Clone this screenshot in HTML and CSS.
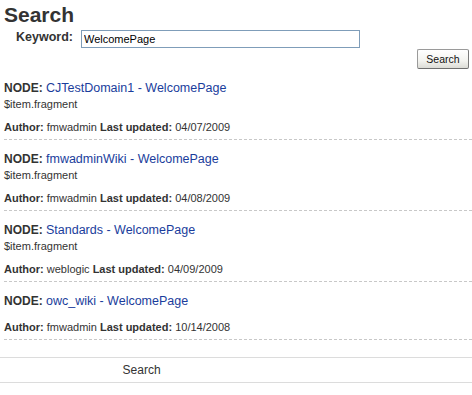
FILE: index.html
```html
<!DOCTYPE html>
<html lang="en">
<head>
  <meta charset="UTF-8">
  <title>Search</title>
  <link rel="stylesheet" href="styles.css">
</head>
<body>

  <div class="page">
    <h1>Search</h1>

    <form class="search-form" onsubmit="return false">
      <div class="keyword-row">
        <label for="kw">Keyword:</label>
        <input id="kw" type="text" value="WelcomePage">
      </div>
      <div class="button-row">
        <button type="submit">Search</button>
      </div>
    </form>

    <div class="results">
      <div class="result">
        <div class="node">NODE: <a href="#">CJTestDomain1 - WelcomePage</a></div>
        <div class="fragment">$item.fragment</div>
        <div class="meta"><b>Author:</b> fmwadmin <b>Last updated:</b> 04/07/2009</div>
      </div>
      <div class="result">
        <div class="node">NODE: <a href="#">fmwadminWiki - WelcomePage</a></div>
        <div class="fragment">$item.fragment</div>
        <div class="meta"><b>Author:</b> fmwadmin <b>Last updated:</b> 04/08/2009</div>
      </div>
      <div class="result">
        <div class="node">NODE: <a href="#">Standards - WelcomePage</a></div>
        <div class="fragment">$item.fragment</div>
        <div class="meta"><b>Author:</b> weblogic <b>Last updated:</b> 04/09/2009</div>
      </div>
      <div class="result">
        <div class="node">NODE: <a href="#">owc_wiki - WelcomePage</a></div>
        <div class="fragment"></div>
        <div class="meta"><b>Author:</b> fmwadmin <b>Last updated:</b> 10/14/2008</div>
      </div>
    </div>
  </div>

  <div class="pager">
    <div class="pager-cell">Search</div>
  </div>

</body>
</html>
```

FILE: styles.css
```css
body {
  margin: 0;
  font-family: "Liberation Sans", Arial, sans-serif;
  color: #333;
  background: #fff;
}
.page {
  padding: 3px 0 0 4px;
}
h1 {
  margin: 0;
  font-size: 21px;
  line-height: 24px;
  font-weight: bold;
  color: #333;
}
.search-form {
  margin: 3px 0 0 0;
}
.keyword-row {
  display: flex;
  align-items: flex-start;
  gap: 8px;
  padding-left: 12px;
}
.keyword-row label {
  font-size: 12.5px;
  font-weight: bold;
  line-height: 14px;
}
.keyword-row input {
  box-sizing: border-box;
  width: 279px;
  height: 18px;
  margin: 0;
  padding: 0 2px;
  border: 1px solid #7f9db9;
  font-family: "Liberation Sans", Arial, sans-serif;
  font-size: 11px;
  color: #000;
  outline: none;
}
.button-row {
  display: flex;
  justify-content: flex-end;
  padding-right: 3px;
  margin-top: 1px;
}
.button-row button {
  box-sizing: border-box;
  width: 52px;
  height: 20px;
  margin: 0;
  padding: 0;
  border: 1px solid #9a9a9a;
  border-bottom-color: #6f6f6f;
  border-right-color: #7a7a7a;
  border-radius: 2px;
  background: linear-gradient(#ffffff, #f3f3ef 60%, #dcdcd6);
  font-family: "Liberation Sans", Arial, sans-serif;
  font-size: 10.5px;
  color: #111;
}
.result {
  padding: 11px 0 5px 0;
  border-bottom: 1px dashed #c8c8c8;
}
.node {
  font-size: 12px;
  line-height: 16px;
  font-weight: bold;
}
.node a {
  font-size: 12.5px;
  font-weight: normal;
  color: #1a3d9c;
  text-decoration: none;
}
.fragment {
  padding-top: 2px;
  font-size: 11px;
  line-height: 13px;
}
.meta {
  margin-top: 9px;
  font-size: 11px;
  line-height: 14px;
}
.pager {
  margin-top: 17px;
  border-top: 1px solid #dcdcdc;
  border-bottom: 1px solid #dcdcdc;
  display: grid;
  grid-template-columns: 60% 1fr;
}
.pager-cell {
  text-align: center;
  font-size: 12px;
  line-height: 24px;
}
```
